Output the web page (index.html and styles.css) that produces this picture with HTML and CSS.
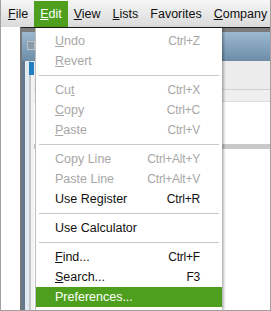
FILE: index.html
```html
<!DOCTYPE html>
<html lang="en">
<head>
  <meta charset="UTF-8">
  <title>Edit Menu</title>
  <link rel="stylesheet" href="styles.css">
</head>
<body>
  <div class="screen">

    <div class="menubar">
      <span class="menu-item"><u>F</u>ile</span>
      <span class="menu-item active"><u>E</u>dit</span>
      <span class="menu-item"><u>V</u>iew</span>
      <span class="menu-item"><u>L</u>ists</span>
      <span class="menu-item">Favorites</span>
      <span class="menu-item"><u>C</u>ompany</span>
    </div>

    <div class="workspace">
      <div class="gutter"></div>
      <div class="app">
        <div class="app-top"></div>
        <div class="app-title">
          <span class="app-icon"></span>
        </div>
        <div class="app-body">
          <div class="side">
            <span class="side-tab"></span>
          </div>
          <div class="main">
            <div class="toolbar"></div>
            <div class="subbar"></div>
            <div class="content">
              <div class="band"></div>
            </div>
          </div>
        </div>
      </div>
    </div>

    <!-- dropdown lies over the app window -->
    <div class="dropdown">
      <div class="item disabled"><span><u>U</u>ndo</span><span class="key">Ctrl+Z</span></div>
      <div class="item disabled"><span><u>R</u>evert</span><span class="key"></span></div>
      <div class="sep"></div>
      <div class="item disabled"><span>Cu<u>t</u></span><span class="key">Ctrl+X</span></div>
      <div class="item disabled"><span><u>C</u>opy</span><span class="key">Ctrl+C</span></div>
      <div class="item disabled"><span><u>P</u>aste</span><span class="key">Ctrl+V</span></div>
      <div class="sep"></div>
      <div class="item disabled"><span>Copy Line</span><span class="key">Ctrl+Alt+Y</span></div>
      <div class="item disabled"><span>Paste Line</span><span class="key">Ctrl+Alt+V</span></div>
      <div class="item"><span>Use Register</span><span class="key">Ctrl+R</span></div>
      <div class="sep"></div>
      <div class="item"><span>Use Calculator</span><span class="key"></span></div>
      <div class="sep"></div>
      <div class="item"><span><u>F</u>ind...</span><span class="key">Ctrl+F</span></div>
      <div class="item"><span><u>S</u>earch...</span><span class="key">F3</span></div>
      <div class="item selected"><span>Preferences...</span><span class="key"></span></div>
    </div>

  </div>
</body>
</html>
```

FILE: styles.css
```css
body {
  margin: 0;
  font-family: "Liberation Sans", Arial, sans-serif;
  font-size: 12.5px;
  background: #fff;
}

u {
  text-decoration: underline;
  text-underline-offset: 1px;
}

.screen {
  position: relative;
  width: 271px;
  height: 311px;
  box-sizing: border-box;
  border: 1px solid #a0a0a0;
  border-top: none;
  display: flex;
  flex-direction: column;
  overflow: hidden;
}

/* top menu bar */
.menubar {
  height: 27px;
  flex-shrink: 0;
  display: flex;
  align-items: flex-end;
  padding-left: 1px;
  background: linear-gradient(#f6f6f6, #dadada);
  color: #111;
}

.menu-item {
  height: 26px;
  line-height: 26px;
  padding: 0 6px;
  white-space: nowrap;
}

.menu-item.active {
  background-color: #4e9f1d;
  color: #fff;
}

/* background window */
.workspace {
  flex: 1;
  display: flex;
}

.gutter {
  width: 19px;
  background: #fff;
}

.app {
  flex: 1;
  display: flex;
  flex-direction: column;
  border-top: 1px solid #1c1c1c;
  border-left: 2px solid #777;
}

.app-top {
  height: 4px;
  background-color: #7b7b7b;
}

.app-title {
  height: 29px;
  background: linear-gradient(#9bb9d0, #6d8ca7);
  position: relative;
}

.app-icon {
  position: absolute;
  left: 5px;
  top: 9px;
  width: 6px;
  height: 7px;
  border: 1px solid #b8c4cc;
  background-color: #8a9aa6;
}

.app-body {
  flex: 1;
  display: flex;
}

.side {
  width: 12px;
  position: relative;
  background: linear-gradient(to right, #62798f 0 3px, #e2e9f0 3px 7px, #c6c9cc 7px 9px, #f2f2f2 9px 12px);
}

.side-tab {
  position: absolute;
  left: 7px;
  top: 1px;
  width: 5px;
  height: 13px;
  background-color: #1f7fc2;
}

.main {
  flex: 1;
  display: flex;
  flex-direction: column;
}

.toolbar {
  height: 28px;
  background-color: #ececec;
  border-bottom: 1px solid #d0d0d0;
}

.subbar {
  height: 11px;
  background-color: #efefef;
  border-bottom: 1px solid #dcdcdc;
}

.content {
  flex: 1;
  background: #fff;
  padding-top: 42px;
}

.band {
  height: 5px;
  background-color: #c9c9c9;
}

/* edit dropdown */
.dropdown {
  position: absolute;
  left: 34px;
  top: 28px;
  bottom: 0;
  width: 187px;
  box-sizing: border-box;
  padding-top: 3px;
  background: #fff;
  border-left: 1px solid #bcbcbc;
  box-shadow: 2px 0 2px rgba(0, 0, 0, 0.28);
}

.item {
  height: 20px;
  display: flex;
  align-items: center;
  justify-content: space-between;
  padding: 0 22px 0 19px;
  color: #111;
  white-space: nowrap;
}

.item .key {
  font-size: 12px;
  letter-spacing: -0.2px;
}

.item.disabled {
  color: #a7a7a7;
}

.item.selected {
  background-color: #4e9f1d;
  color: #fff;
}

.sep {
  height: 9px;
  display: flex;
  align-items: center;
  padding: 0 3px;
}

.sep::before {
  content: "";
  flex: 1;
  height: 1px;
  background-color: #c8c8c8;
}
```
